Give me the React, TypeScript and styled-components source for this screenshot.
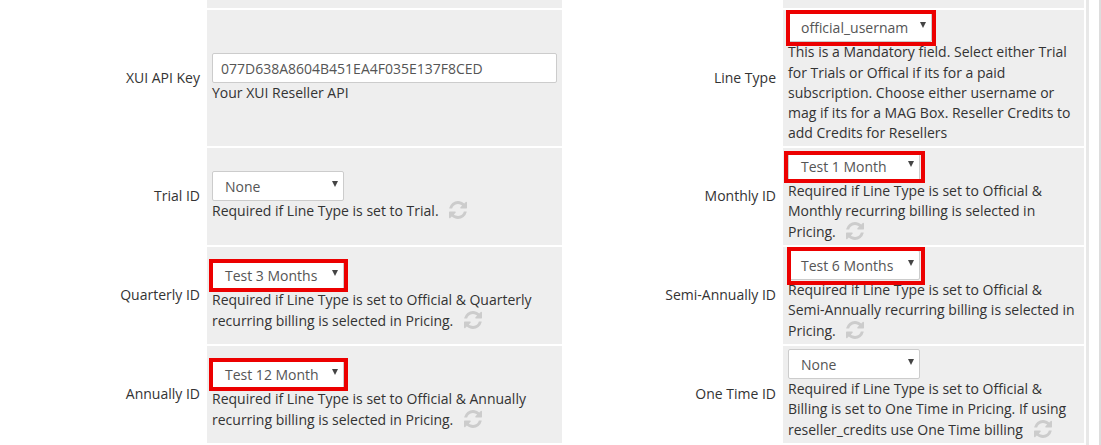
import React from "react";
import styled, { createGlobalStyle } from "styled-components";

const GlobalStyle = createGlobalStyle`
  html, body {
    margin: 0;
    padding: 0;
    height: 445px;
    overflow: hidden;
    background: #fff;
  }
  body {
    font-family: "Open Sans", "Liberation Sans", sans-serif;
    font-size: 14px;
    color: #333;
  }
`;

const Page = styled.div`
  width: 1101px;
  height: 454px;
  margin-top: -9px;
  display: flex;
  overflow: hidden;
`;

const Table = styled.div`
  display: grid;
  grid-template-columns: 207px 355px 221px 301px;
  grid-template-rows: 17px 136px 97px 97px 97px;
  row-gap: 2px;
`;

const Rail = styled.div`
  width: 3px;
  margin-left: 2px;
  background: #e8e8e8;
`;

const Edge = styled.div`
  width: 2px;
  margin-left: auto;
  background: #ddd;
`;

const Label = styled.div`
  display: flex;
  align-items: center;
  justify-content: flex-end;
  padding-right: 7px;
  padding-bottom: 1px;
  font-size: 14px;
  line-height: 20px;
`;

const Field = styled.div`
  background: #eee;
  padding: 0 5px;
  display: flex;
  flex-direction: column;
  justify-content: center;
  overflow: hidden;
`;

const Input = styled.div`
  box-sizing: border-box;
  width: 345px;
  height: 30px;
  margin-top: 1px;
  padding: 0 8px;
  background: #fff;
  border: 1px solid #ccc;
  border-radius: 2px;
  display: flex;
  align-items: center;
  font-size: 14px;
  color: #555;
`;

const SelectBox = styled.div<{ $width: number }>`
  box-sizing: border-box;
  width: ${(p) => p.$width}px;
  height: 30px;
  flex-shrink: 0;
  padding: 0 12px;
  background: #fff;
  border: 1px solid #ccc;
  border-radius: 2px;
  display: flex;
  align-items: center;
  justify-content: space-between;
  font-size: 14px;
  color: #555;
  white-space: nowrap;
  position: relative;
`;

// hand drawn red box lying over the select, every one has a slightly different size
const Mark = styled.span<{ $inset: string }>`
  position: absolute;
  inset: ${(p) => p.$inset};
  border: 4px solid #ec0000;
  pointer-events: none;
  z-index: 1;
`;

const Arrow = styled.span`
  width: 0;
  height: 0;
  margin-right: -7px;
  margin-top: -4px;
  border-left: 3px solid transparent;
  border-right: 3px solid transparent;
  border-top: 6px solid #444;
`;

const Help = styled.div`
  font-size: 14px;
  line-height: 20.3px;
  color: #333;
`;

const Spinner = styled.svg`
  width: 18px;
  height: 18px;
  margin-left: 7px;
  vertical-align: -3px;
  fill: #ccc;
`;

const Refresh = () => (
  <Spinner viewBox="0 0 1536 1536">
    <path d="M1511 928q0 5-1 7-64 268-268 434.500T764 1536q-146 0-282.500-55T238 1324l-129 129q-19 19-45 19t-45-19-19-45V960q0-26 19-45t45-19h448q26 0 45 19t19 45-19 45l-137 137q71 66 161 102t187 36q134 0 250-65t186-179q11-17 53-117 8-23 30-23h192q13 0 22.500 9.500t9.500 22.500zm25-800v448q0 26-19 45t-45 19h-448q-26 0-45-19t-19-45 19-45l138-138Q969 256 768 256q-134 0-250 65T332 500q-11 17-53 117-8 23-30 23H50q-13 0-22.500-9.500T18 608v-7q65-268 270-434.500T768 0q146 0 284 55.500T1297 212l130-129q19-19 45-19t45 19 19 45z" />
  </Spinner>
);

const Select = ({ value, width = 132, mark }: { value: string; width?: number; mark?: string }) => (
  <SelectBox $width={width}>
    <span>{value}</span>
    <Arrow />
    {mark && <Mark $inset={mark} />}
  </SelectBox>
);

export default function App() {
  return (
    <Page>
      <GlobalStyle />
      <Table>
        <Label />
        <Field />
        <Label />
        <Field />

        <Label>XUI API Key</Label>
        <Field>
          <Input>077D638A8604B451EA4F035E137F8CED</Input>
          <Help>Your XUI Reseller API</Help>
        </Field>
        <Label>Line Type</Label>
        <Field>
          <Select value="official_usernam" width={144} mark="-3px -5px -5px -3px" />
          <Help>
            This is a Mandatory field. Select either Trial for Trials or Offical if its for a paid
            subscription. Choose either username or mag if its for a MAG Box. Reseller Credits to
            add Credits for Resellers
          </Help>
        </Field>

        <Label>Trial ID</Label>
        <Field>
          <Select value="None" />
          <Help>
            Required if Line Type is set to Trial. <Refresh />
          </Help>
        </Field>
        <Label>Monthly ID</Label>
        <Field>
          <Select value="Test 1 Month" mark="-1px -6px -3px -5px" />
          <Help>
            Required if Line Type is set to Official &amp; Monthly recurring billing is selected in
            Pricing. <Refresh />
          </Help>
        </Field>

        <Label>Quarterly ID</Label>
        <Field>
          <Select value="Test 3 Months" mark="-2px -5px -3px -4px" />
          <Help>
            Required if Line Type is set to Official &amp; Quarterly recurring billing is selected
            in Pricing. <Refresh />
          </Help>
        </Field>
        <Label>Semi-Annually ID</Label>
        <Field>
          <Select value="Test 6 Months" mark="-4px -6px -6px -2px" />
          <Help>
            Required if Line Type is set to Official &amp; Semi-Annually recurring billing is
            selected in Pricing. <Refresh />
          </Help>
        </Field>

        <Label>Annually ID</Label>
        <Field>
          <Select value="Test 12 Month" mark="-2px -5px -3px -4px" />
          <Help>
            Required if Line Type is set to Official &amp; Annually recurring billing is selected
            in Pricing. <Refresh />
          </Help>
        </Field>
        <Label>One Time ID</Label>
        <Field>
          <Select value="None" />
          <Help>
            Required if Line Type is set to Official &amp; Billing is set to One Time in Pricing. If
            using reseller_credits use One Time billing <Refresh />
          </Help>
        </Field>
      </Table>
      <Rail />
      <Edge />
    </Page>
  );
}
